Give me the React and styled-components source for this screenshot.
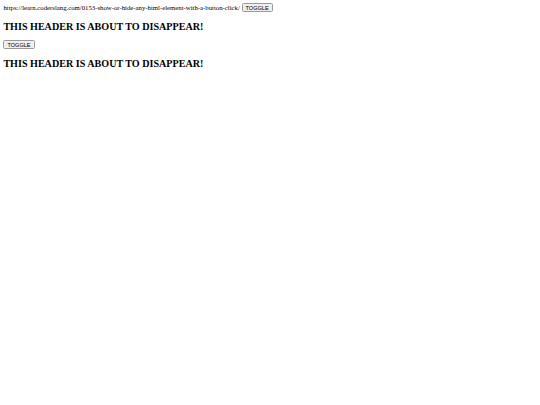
import React from "react";
import styled, { createGlobalStyle } from "styled-components";

const Global = createGlobalStyle`
  html, body { margin: 0; padding: 0; background: #fff; }
  body { font-family: "Liberation Serif", "Times New Roman", serif; color: #000; }
`;

const Page = styled.div`
  padding: 3.4px;
  font-size: 6.75px;
  line-height: normal;
`;

const LinkLine = styled.div`
  display: flex;
  align-items: center;
  gap: 1.7px;
`;

const Button = styled.button`
  font-family: "Liberation Sans", Arial, sans-serif;
  font-size: 5.6px;
  line-height: normal;
  color: #000;
  background: #efefef;
  border: 1px solid #9a9a9a;
  border-radius: 1.5px;
  padding: 0.5px 3px;
  margin: 0;
`;

const Heading = styled.h2`
  font-size: 10.1px;
  font-weight: bold;
  margin: 8.4px 0;
  line-height: normal;
`;

const Section = styled.div`
  display: flex;
  flex-direction: column;
  align-items: flex-start;
`;

export default function App() {
  return (
    <>
      <Global />
      <Page>
        <LinkLine>
          <span>https://learn.coderslang.com/0153-show-or-hide-any-html-element-with-a-button-click/</span>
          <Button>TOGGLE</Button>
        </LinkLine>
        <Heading>THIS HEADER IS ABOUT TO DISAPPEAR!</Heading>
        <Section>
          <Button>TOGGLE</Button>
          <Heading>THIS HEADER IS ABOUT TO DISAPPEAR!</Heading>
        </Section>
      </Page>
    </>
  );
}
